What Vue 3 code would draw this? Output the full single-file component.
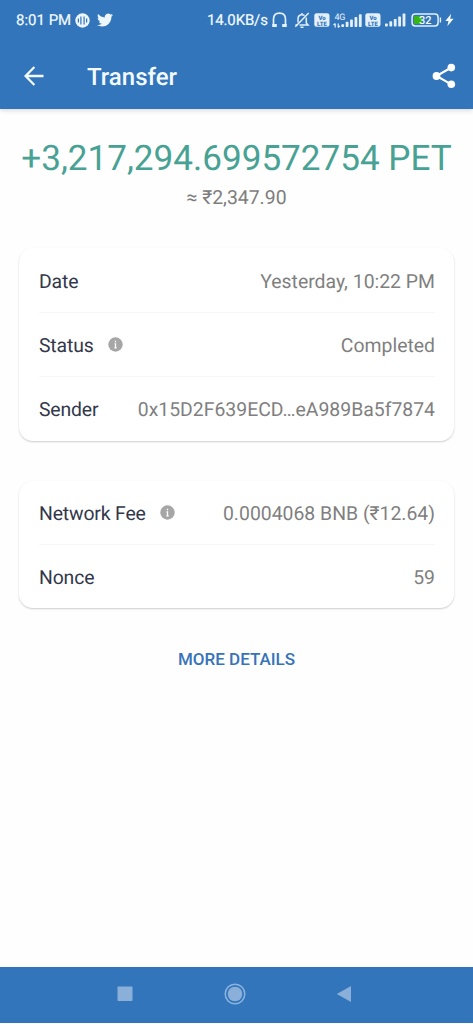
<script setup>
const groups = [
  [
    { label: 'Date', value: 'Yesterday, 10:22 PM' },
    { label: 'Status', value: 'Completed', info: true },
    { label: 'Sender', value: '0x15D2F639ECD…eA989Ba5f7874' },
  ],
  [
    { label: 'Network Fee', value: '0.0004068 BNB (₹12.64)', info: true },
    { label: 'Nonce', value: '59' },
  ],
]
</script>

<template>
  <div class="screen">
    <header class="top">
      <div class="status">
        <span class="time">8:01 PM</span>
        <svg class="casts" width="15" height="15" viewBox="0 0 15 15">
          <circle cx="7.5" cy="7.5" r="7.2" fill="#edf5fd" />
          <path d="M3.400 5.500v4M5.900 3.500v8M9.100 3.500v8M11.600 5.500v4" stroke="#3275bb" stroke-width="1.200" />
        </svg>
        <svg class="bird" width="16" height="14" viewBox="0 2 24 20">
          <path fill="#edf5fd" d="M23.95 4.57a10 10 0 0 1-2.82.77 4.96 4.96 0 0 0 2.16-2.72c-.95.55-2 .95-3.13 1.18a4.92 4.92 0 0 0-8.38 4.48C7.69 8.1 4.07 6.13 1.64 3.16a4.82 4.82 0 0 0-.67 2.48c0 1.71.87 3.21 2.19 4.1a4.9 4.9 0 0 1-2.23-.62v.06a4.92 4.92 0 0 0 3.95 4.83 5 5 0 0 1-2.21.08 4.94 4.94 0 0 0 4.6 3.42A9.87 9.87 0 0 1 0 19.54a13.99 13.99 0 0 0 7.56 2.21c9.05 0 14-7.5 14-13.98 0-.21 0-.42-.02-.63a9.94 9.94 0 0 0 2.46-2.55z" />
        </svg>
        <span class="speed">14.0KB/s</span>
        <svg class="phones" width="17" height="16" viewBox="0 0 17 16" fill="none" stroke="#e4f0fc">
          <path d="M2.500 13V7.200C2.500 3.500 4.900 1.200 8.500 1.200s6 2.300 6 6V13" stroke-width="1.700" />
          <path d="M1.200 13.500h4.600M11.200 13.500h4.600" stroke-width="3" />
        </svg>
        <svg class="bell" width="16" height="17" viewBox="0 0 16 17" fill="none" stroke="#e4f0fc" stroke-width="1.500">
          <path d="M4 10.500V7C4 4.200 5.600 2.700 8 2.700c1 0 1.900.3 2.600.8M12.300 5.600V11l1.700 1.900H5.500M8 .9v1.800M6.500 15.300h3" />
          <path d="M14.700 1 1.300 14.800" />
          <path d="M1.500 12.900h2" />
        </svg>
        <svg class="volte" width="16" height="14" viewBox="0 0 16 14">
          <rect x=".3" y=".2" width="15.200" height="13.600" rx="2.300" fill="#e4f0fc" />
          <text x="8" y="6.500" text-anchor="middle">Vo</text>
          <text x="8" y="12.500" text-anchor="middle">LTE</text>
        </svg>
        <svg class="signal" width="30" height="17" viewBox="0 0 30 17">
          <text class="gen" x="1.500" y="7.500" textLength="11">4G</text>
          <path d="M2.200 15.500v-4M.5 13.200l1.700-1.700M5.200 11.500v4M6.900 13.800l-1.700 1.700" stroke="#e4f0fc" stroke-width="1.200" fill="none" />
          <g fill="#e4f0fc">
            <rect x="8.300" y="12.200" width="2.800" height="2.800" rx=".7" /><rect x="12.700" y="9.800" width="2.800" height="5.200" rx=".7" /><rect x="17.100" y="7.400" width="2.800" height="7.600" rx=".7" /><rect x="21.500" y="5" width="2.800" height="10" rx=".7" /><rect x="25.900" y="2.200" width="2.800" height="12.800" rx=".7" />
          </g>
        </svg>
        <svg class="volte second" width="16" height="14" viewBox="0 0 16 14">
          <rect x=".3" y=".2" width="15.200" height="13.600" rx="2.300" fill="#e4f0fc" />
          <text x="8" y="6.500" text-anchor="middle">Vo</text>
          <text x="8" y="12.500" text-anchor="middle">LTE</text>
        </svg>
        <svg class="bars" width="21" height="14" viewBox="0 0 21 14" fill="#e4f0fc">
          <rect x="0" y="10.600" width="2.800" height="2.800" rx=".7" /><rect x="4.400" y="8.300" width="2.800" height="5.100" rx=".7" /><rect x="8.800" y="5.900" width="2.800" height="7.500" rx=".7" /><rect x="13.200" y="3.500" width="2.800" height="9.900" rx=".7" /><rect x="17.600" y=".6" width="2.800" height="12.800" rx=".7" />
        </svg>
        <svg class="battery" width="31" height="14" viewBox="0 0 31 14">
          <rect x="1.100" y="1.100" width="26" height="11.800" rx="3.200" fill="none" stroke="#e4f0fc" stroke-width="1.500" />
          <rect x="3" y="3" width="8" height="8" rx="1" fill="#38b414" />
          <path d="M29.400 4.500v5" stroke="#e4f0fc" stroke-width="1.400" />
          <text x="14.200" y="10.700" text-anchor="middle">32</text>
        </svg>
        <svg class="bolt" width="9" height="14" viewBox="0 0 9 14">
          <path d="M6.200.7.3 8h3.200l-1.200 5.300L8.600 5.700H5.200z" fill="#f3f9ff" />
        </svg>
      </div>
      <div class="bar">
        <svg class="back" width="20" height="20" viewBox="0 0 20 20" fill="none" stroke="#f3faff" stroke-width="2.300">
          <path d="M19.500 10H2M10.400 1 1.500 10l8.900 9" />
        </svg>
        <h1>Transfer</h1>
        <svg class="share" width="24" height="26" viewBox="0 0 24 26" fill="#fff">
          <path d="M19.300 4.500 4.500 13l14.800 8.300" fill="none" stroke="#fff" stroke-width="2.100" />
          <circle cx="19.300" cy="4.600" r="3.800" /><circle cx="4.500" cy="13" r="3.900" /><circle cx="19.300" cy="21.200" r="3.800" />
        </svg>
      </div>
    </header>

    <main>
      <div class="amount">+3,217,294.699572754 PET</div>
      <div class="fiat">≈ ₹2,347.90</div>
      <section v-for="(rows, i) in groups" :key="i" class="card">
        <div v-for="row in rows" :key="row.label" class="row">
          <span class="label">{{ row.label }}</span>
          <svg v-if="row.info" class="info" width="15" height="15" viewBox="0 0 15 15">
            <circle cx="7.500" cy="7.500" r="7.200" fill="#a6a6a6" />
            <path d="M7.500 3.700v1.600M6.500 6.800h1v4M6.300 10.800h2.400" fill="none" stroke="#fff" stroke-width="1.300" />
          </svg>
          <span class="value">{{ row.value }}</span>
        </div>
      </section>
      <button class="more" type="button">MORE DETAILS</button>
    </main>

    <nav class="nav">
      <svg width="16" height="22" viewBox="0 0 16 22"><rect x=".5" y="3.500" width="15" height="14.500" rx=".8" fill="#8aafd8" /></svg>
      <svg width="22" height="22" viewBox="0 0 22 22">
        <circle cx="11" cy="11" r="9.800" fill="none" stroke="#8ab3df" stroke-width="1.500" /><circle cx="11" cy="11" r="7.300" fill="#8aafd8" />
      </svg>
      <svg width="16" height="22" viewBox="0 0 16 22"><path d="M15 3v16L.8 11z" fill="#8aafd8" /></svg>
    </nav>
  </div>
</template>

<style>
body { background: #fefefe; }
</style>

<style scoped>
.screen {
  width: 473px;
  height: 1023px;
  display: flex;
  flex-direction: column;
  background: #fefefe;
  font-family: Roboto, "Noto Sans", sans-serif;
  text-rendering: geometricPrecision;
  overflow: hidden;
}
.screen svg { display: block; flex: none; }
.top {
  height: 109px;
  flex: none;
  background: #3275bb;
  color: #f3faff;
  box-shadow: 0 1px 5px rgba(0, 0, 0, .18);
}
.status {
  height: 40px;
  display: flex;
  align-items: center;
  padding-left: 16px;
  font-size: 15px;
  white-space: nowrap;
  -webkit-text-stroke: .2px #f3faff;
}
.status svg { -webkit-text-stroke: 0; }
.time { width: 59px; }
.bird { margin-left: 7px; }
.speed { margin-left: 94px; width: 64px; letter-spacing: -.15px; }
.phones { margin-right: 6px; }
.bell { margin-right: 4px; }
.volte text { font-size: 6px; font-weight: 900; fill: #3275bb; }
.signal { margin: 0 2px 0 3px; }
.gen { font-size: 9px; fill: #e4f0fc; }
.bars { margin: 0 5px 0 4px; }
.battery text { font-size: 11px; font-weight: 500; fill: #f3faff; }
.bolt { margin-left: 3px; }
.bar {
  height: 72px;
  display: flex;
  align-items: center;
  padding: 0 17px 0 24px;
}
h1 {
  flex: 1;
  margin: 2px 0 0 43px;
  font-size: 24px;
  font-weight: 500;
  line-height: 30px;
}
main {
  flex: 1;
  display: flex;
  flex-direction: column;
  align-items: center;
  padding: 27px 19px 0;
}
.amount {
  font-size: 35.1px;
  line-height: 44px;
  color: #48a294;
  white-space: nowrap;
}
.fiat {
  margin: 5px 0 37px;
  font-size: 19.4px;
  line-height: 26px;
  color: #7d7d7d;
}
.card {
  box-sizing: border-box;
  width: 435px;
  padding: 0 19px 1px 20px;
  margin-bottom: 40px;
  border-radius: 14px;
  background: #fff;
  box-shadow: 0 1px 2px rgba(0, 0, 0, .2);
}
.card + .card { padding-bottom: 0; margin-bottom: 39px; }
.row {
  box-sizing: border-box;
  height: 64px;
  display: flex;
  align-items: center;
  padding-top: 3px;
  font-size: 19.4px;
  line-height: 26px;
}
.row + .row { border-top: 1px solid #f7f7f7; }
.card + .card .row:first-child { height: 63px; }
.label { color: #32384a; letter-spacing: -.15px; }
.info { margin-left: 14px; margin-top: -4px; }
.value { margin-left: auto; color: #7f7f7f; white-space: nowrap; }
.more {
  border: 0;
  padding: 0;
  background: none;
  font: 500 17px/24px Roboto, sans-serif;
  color: #3773b8;
}
.nav {
  height: 56px;
  flex: none;
  display: flex;
  align-items: center;
  justify-content: space-between;
  box-sizing: border-box;
  padding: 0 121px 2px 117px;
  background: #3275bb;
}
</style>
